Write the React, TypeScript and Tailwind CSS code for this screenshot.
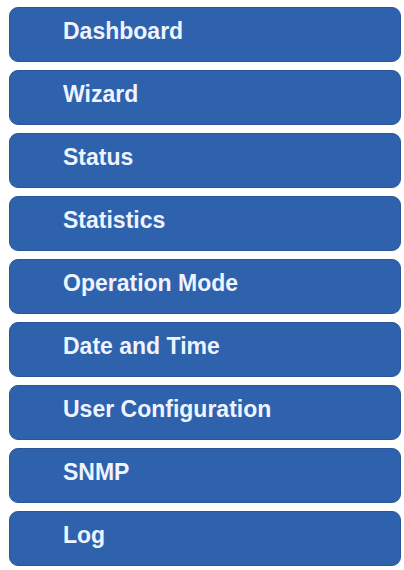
const menuItems = [
  "Dashboard",
  "Wizard",
  "Status",
  "Statistics",
  "Operation Mode",
  "Date and Time",
  "User Configuration",
  "SNMP",
  "Log",
]

const App = () => {
  return (
    <div className="w-[404px] h-[570px] bg-white pt-[7px] pl-[9px] pr-[3px] font-['Liberation_Sans',Arial,sans-serif]">
      <nav className="flex flex-col gap-[8px]">
        {menuItems.map((item) => (
          <button
            key={item}
            className="h-[55px] w-full flex items-center pb-[6px] pl-[53px] rounded-[9px] bg-[#2f62ac] border border-[#2a5699] text-left"
          >
            <span className="text-[23px] leading-[23px] font-bold text-[#eef4ff]">{item}</span>
          </button>
        ))}
      </nav>
    </div>
  )
}

export default App
